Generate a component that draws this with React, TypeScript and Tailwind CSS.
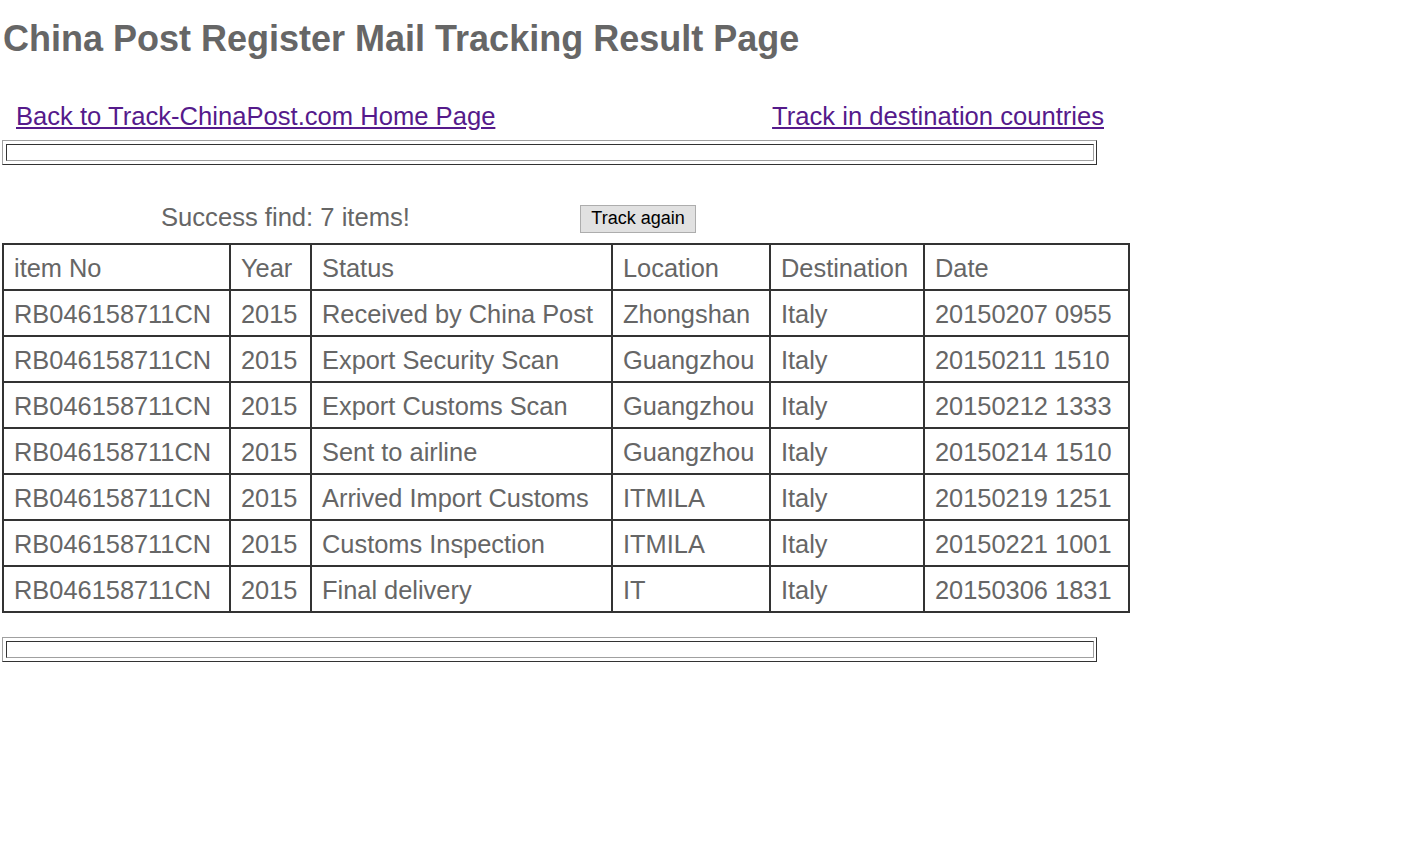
import React from "react";

const rows = [
  ["RB046158711CN", "2015", "Received by China Post", "Zhongshan", "Italy", "20150207 0955"],
  ["RB046158711CN", "2015", "Export Security Scan", "Guangzhou", "Italy", "20150211 1510"],
  ["RB046158711CN", "2015", "Export Customs Scan", "Guangzhou", "Italy", "20150212 1333"],
  ["RB046158711CN", "2015", "Sent to airline", "Guangzhou", "Italy", "20150214 1510"],
  ["RB046158711CN", "2015", "Arrived Import Customs", "ITMILA", "Italy", "20150219 1251"],
  ["RB046158711CN", "2015", "Customs Inspection", "ITMILA", "Italy", "20150221 1001"],
  ["RB046158711CN", "2015", "Final delivery", "IT", "Italy", "20150306 1831"],
];

const widths = ["w-[227px]", "w-[81px]", "w-[301px]", "w-[158px]", "w-[154px]", "w-[205px]"];

function EmptyBox() {
  return (
    <div className="w-[1095px] h-[25px] ml-[2px] border border-t-[#a0a0a0] border-l-[#a0a0a0] border-r-[#333] border-b-[#333] pt-[3px] pl-[3px] pr-[2px] pb-[3px]">
      <div className="h-full border border-t-[#333] border-l-[#333] border-r-[#a0a0a0] border-b-[#a0a0a0]" />
    </div>
  );
}

export default function App() {
  return (
    <div className="min-h-[848px] bg-white text-[#666] font-['Liberation_Sans',Arial,sans-serif]">
      <h1 className="pl-[3px] pt-[18px] text-[36px] leading-[42px] font-bold text-[#666]">
        China Post Register Mail Tracking Result Page
      </h1>
      <div className="flex w-[1104px] justify-between pl-[16px] mt-[42px] text-[25.6px] leading-[29px]">
        <a href="#" className="text-[#551a8b] underline">Back to Track-ChinaPost.com Home Page</a>
        <a href="#" className="text-[#551a8b] underline">Track in destination countries</a>
      </div>
      <div className="mt-[9px]">
        <EmptyBox />
      </div>
      <div className="flex items-center mt-[40px] h-[28px]">
        <div className="w-[580px] pl-[161px] text-[25.6px] leading-[29px] -mt-[4px]">Success find: 7 items!</div>
        <button className="h-[28px] w-[116px] border border-[#adadad] bg-[#e1e1e1] text-black text-[18px] leading-[20px] pb-[2px]">
          Track again
        </button>
      </div>
      <table className="ml-[2px] mt-[10px] border-collapse border-2 border-[#333] text-[25.4px] text-[#666]">
        <tbody>
          <tr className="h-[46px]">
            {["item No", "Year", "Status", "Location", "Destination", "Date"].map((h, i) => (
              <td key={i} className={`${widths[i]} border-2 border-[#333] pl-[10px] pr-[10px] pt-[2px] whitespace-nowrap`}>
                {h}
              </td>
            ))}
          </tr>
          {rows.map((r, ri) => (
            <tr key={ri} className="h-[46px]">
              {r.map((c, i) => (
                <td key={i} className={`${widths[i]} border-2 border-[#333] pl-[10px] pr-[10px] pt-[2px] whitespace-nowrap`}>
                  {c}
                </td>
              ))}
            </tr>
          ))}
        </tbody>
      </table>
      <div className="mt-[24px]">
        <EmptyBox />
      </div>
    </div>
  );
}
